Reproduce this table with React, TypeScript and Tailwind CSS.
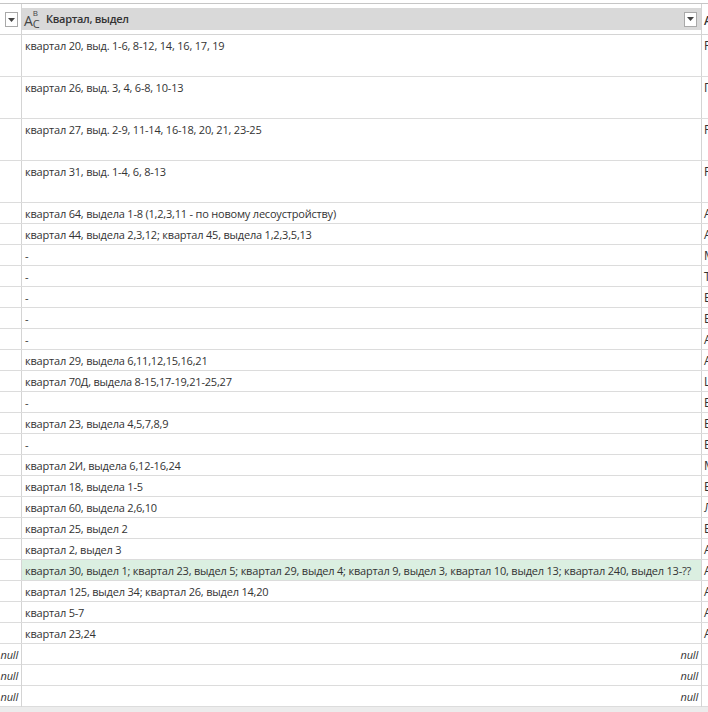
import React from "react";

interface Row {
  text: string;
  next: string;
  tall?: boolean;
  isNull?: boolean;
  selected?: boolean;
}

const rows: Row[] = [
  { text: "квартал 20, выд. 1-6, 8-12, 14, 16, 17, 19", next: "Р", tall: true },
  { text: "квартал 26, выд. 3, 4, 6-8, 10-13", next: "П", tall: true },
  { text: "квартал 27, выд. 2-9, 11-14, 16-18, 20, 21, 23-25", next: "Р", tall: true },
  { text: "квартал 31, выд. 1-4, 6, 8-13", next: "Р", tall: true },
  { text: "квартал 64, выдела 1-8 (1,2,3,11 - по новому лесоустройству)", next: "А" },
  { text: "квартал 44, выдела 2,3,12; квартал 45, выдела 1,2,3,5,13", next: "А" },
  { text: "-", next: "М" },
  { text: "-", next: "Т" },
  { text: "-", next: "Б" },
  { text: "-", next: "Б" },
  { text: "-", next: "А" },
  { text: "квартал 29, выдела 6,11,12,15,16,21", next: "А" },
  { text: "квартал 70Д, выдела 8-15,17-19,21-25,27", next: "Ш" },
  { text: "-", next: "Б" },
  { text: "квартал 23, выдела 4,5,7,8,9", next: "Б" },
  { text: "-", next: "Б" },
  { text: "квартал 2И, выдела 6,12-16,24", next: "М" },
  { text: "квартал 18, выдела 1-5", next: "Б" },
  { text: "квартал 60, выдела 2,6,10", next: "Л" },
  { text: "квартал 25, выдел 2", next: "Б" },
  { text: "квартал 2, выдел 3", next: "А" },
  {
    text: "квартал 30, выдел 1; квартал 23, выдел 5; квартал 29, выдел 4; квартал 9, выдел 3, квартал 10, выдел 13; квартал 240, выдел 13-??",
    next: "А",
    selected: true,
  },
  { text: "квартал 125, выдел 34; квартал 26, выдел 14,20", next: "А" },
  { text: "квартал 5-7", next: "А" },
  { text: "квартал 23,24", next: "А" },
  { text: "", next: "", isNull: true },
  { text: "", next: "", isNull: true },
  { text: "", next: "", isNull: true },
];

function FilterButton() {
  return (
    <div className="flex h-[15px] w-[13px] items-center justify-center border border-[#a9a9a9] bg-white">
      <svg width="7" height="4" viewBox="0 0 7 4">
        <path d="M0 0 L7 0 L3.5 4 Z" fill="#444" />
      </svg>
    </div>
  );
}

// "ABC" text-type badge shown before the column name
function TypeIcon() {
  return (
    <div className="flex h-[22px] w-[18px] items-start text-[#444] leading-none">
      <span className="mt-[6px] text-[14px]">A</span>
      <div className="flex flex-col">
        <span className="mt-px text-[8px]">B</span>
        <span className="mt-px text-[11px]">C</span>
      </div>
    </div>
  );
}

export default function App() {
  return (
    <div
      className="h-[712px] w-[708px] overflow-hidden bg-white text-[11px] tracking-[-0.2px] text-[#333]"
      style={{ fontFamily: '"Open Sans", "Noto Sans", sans-serif' }}
    >
      <div className="h-[3px]" />
      <div className="h-px bg-[#c6c6c6]" />
      {/* header */}
      <div className="grid h-[31px] grid-cols-[22px_680px_6px] border-b border-[#d4d4d4]">
        <div className="flex items-start border-r border-[#d4d4d4] pl-[5px] pt-[8px]">
          <FilterButton />
        </div>
        <div className="flex flex-col border-r border-[#d4d4d4]">
          <div className="mt-[4px] flex h-[22px] items-center bg-[#d9d9d9] pl-[2px] pr-[4px] tracking-normal">
            <TypeIcon />
            <span className="ml-[4px] text-[11px] font-semibold tracking-[-0.3px] text-[#333]">Квартал, выдел</span>
            <div className="ml-auto">
              <FilterButton />
            </div>
          </div>
        </div>
        <div className="overflow-hidden pl-[2px] pt-[8px] text-[12px] font-semibold">A</div>
      </div>
      {/* rows */}
      {rows.map((r, i) => (
        <div
          key={i}
          className={`grid grid-cols-[22px_680px_6px] border-b border-[#dcdcdc] ${r.tall ? "h-[42px]" : "h-[21px]"}`}
        >
          <div className="border-r border-[#d4d4d4] pr-[3px] pt-px text-right italic leading-[20px]">
            {r.isNull ? "null" : ""}
          </div>
          <div
            className={`overflow-hidden whitespace-nowrap border-r border-[#d4d4d4] pt-px leading-[20px] ${
              r.selected ? "bg-[#dbefe1]" : ""
            } ${r.isNull ? "pr-[3px] text-right italic" : "pl-[3px]"}`}
          >
            {r.isNull ? "null" : r.text}
          </div>
          <div className="overflow-hidden whitespace-nowrap pl-[2px] pt-px text-[12px] leading-[20px]">{r.next}</div>
        </div>
      ))}
      <div className="h-[6px] bg-[#ececec]" />
    </div>
  );
}
